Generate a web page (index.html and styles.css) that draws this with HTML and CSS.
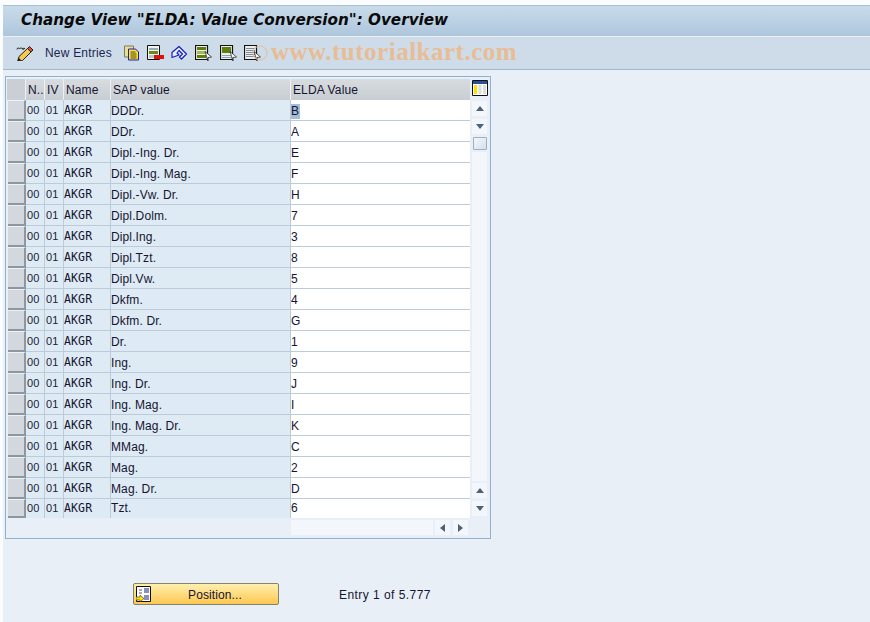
FILE: index.html
```html
<!DOCTYPE html>
<html lang="en">
<head>
<meta charset="utf-8">
<title>Change View</title>
<link rel="stylesheet" href="styles.css">
</head>
<body>
<div class="screen">
  <header class="titlebar"><h1>Change View "ELDA: Value Conversion": Overview</h1></header>
  <div class="toolbar">
    <svg class="ic ic-first" viewBox="0 0 18 16"><path d="M1 4.500c0-2 2-2 2.500-.5M3.500 4c1-1.500 2-1.500 2.500-.5s2-1.500 3 .5M6 3.500c.5 1 2 1 2.500 0" fill="none" stroke="#222"/><path d="M3 11.500l8.500-8 3.500 3.500-8.500 8.500-5 1.500z" fill="#f6c84e" stroke="#222"/><path d="M11.500 3.500l2-2 3.500 3.500-2 2z" fill="#e0503a" stroke="#222"/><path d="M1.500 16.500l1-4 3 3z" fill="#222"/></svg>
    <span class="tool-text">New Entries</span>
    <svg class="ic ic-copy" viewBox="0 0 16 16"><path d="M1 1h9v11H1z" fill="#e8e090" stroke="#777"/><path d="M5 4h7l3 3v8H5z" fill="#ffe21a" stroke="#1a1ad0"/><path d="M7 7h5M7 9h6M7 11h6M7 13h6" stroke="#444"/></svg>
    <svg class="ic ic-delim" viewBox="0 0 17 16"><path d="M.5.500h12v14H.5z" fill="#f2f2f2" stroke="#111"/><path d="M2 3h9v2H2z" fill="#9ab"/><path d="M2 6h9v3H2z" fill="#6b8a10"/><path d="M2 10h9v3H2z" fill="#b8c6d4"/><path d="M7 10h10v4H7z" fill="#e01010"/></svg>
    <svg class="ic ic-undo" viewBox="0 0 17 16"><path d="M1 7.500L8 1.500l7.500 7.500-5 5-2-2 3-3-3.500-3.500-2 2.500 2 2-7 2.500z" fill="#e6eef8" stroke="#1a1ac0" stroke-width="1.200" stroke-linejoin="round"/></svg>
    <svg class="ic ic-sel" viewBox="0 0 17 16"><path d="M.5.500h12v14H.5z" fill="#eee" stroke="#111" stroke-width="1.200"/><path d="M2 2h9v3H2z" fill="#5f7f08"/><path d="M2 6h9v3H2z" fill="#a3b860"/><path d="M2 10h9v3H2z" fill="#5f7f08"/><path d="M10 6.500l6.500 5.500-3.500.5v3.500z" fill="#fff" stroke="#111" stroke-width=".7"/></svg>
    <svg class="ic ic-sel" viewBox="0 0 17 16"><path d="M.5.500h12v14H.5z" fill="#eee" stroke="#111" stroke-width="1.200"/><path d="M2 2h9v6H2z" fill="#5f7f08"/><path d="M2 10h9v1H2zM2 12h9v1H2z" fill="#8aa0b8"/><path d="M10 6.500l6.500 5.500-3.500.5v3.500z" fill="#fff" stroke="#111" stroke-width=".7"/></svg>
    <svg class="ic ic-sel" viewBox="0 0 17 16"><path d="M.5.500h12v14H.5z" fill="#eee" stroke="#111" stroke-width="1.200"/><path d="M2 3h9v1H2zM2 5h9v1H2zM2 7h9v1H2zM2 9h9v1H2zM2 11h9v1H2z" fill="#7a8a9a"/><path d="M10 6.500l6.500 5.500-3.500.5v3.500z" fill="#fff" stroke="#111" stroke-width=".7"/></svg>
    <svg class="mark-circle" viewBox="0 0 16 16"><circle cx="8" cy="8" r="7" fill="none" stroke="#e8bd95" stroke-width="1"/></svg>
    <span class="watermark">www.tutorialkart.com</span>
  </div>
  <main class="content">
    <section class="panel">
      <div class="table">
        <div class="row head"><div class="sel"></div><div class="c">N..</div><div class="c">IV</div><div class="c">Name</div><div class="c sap">SAP value</div><div class="c elda">ELDA Value</div></div>
        <div class="row"><div class="sel"></div><div class="c n">00</div><div class="c n">01</div><div class="c k">AKGR</div><div class="c sap">DDDr.</div><div class="c elda"><span class="hl">B</span></div></div>
        <div class="row"><div class="sel"></div><div class="c n">00</div><div class="c n">01</div><div class="c k">AKGR</div><div class="c sap">DDr.</div><div class="c elda">A</div></div>
        <div class="row"><div class="sel"></div><div class="c n">00</div><div class="c n">01</div><div class="c k">AKGR</div><div class="c sap">Dipl.-Ing. Dr.</div><div class="c elda">E</div></div>
        <div class="row"><div class="sel"></div><div class="c n">00</div><div class="c n">01</div><div class="c k">AKGR</div><div class="c sap">Dipl.-Ing. Mag.</div><div class="c elda">F</div></div>
        <div class="row"><div class="sel"></div><div class="c n">00</div><div class="c n">01</div><div class="c k">AKGR</div><div class="c sap">Dipl.-Vw. Dr.</div><div class="c elda">H</div></div>
        <div class="row"><div class="sel"></div><div class="c n">00</div><div class="c n">01</div><div class="c k">AKGR</div><div class="c sap">Dipl.Dolm.</div><div class="c elda">7</div></div>
        <div class="row"><div class="sel"></div><div class="c n">00</div><div class="c n">01</div><div class="c k">AKGR</div><div class="c sap">Dipl.Ing.</div><div class="c elda">3</div></div>
        <div class="row"><div class="sel"></div><div class="c n">00</div><div class="c n">01</div><div class="c k">AKGR</div><div class="c sap">Dipl.Tzt.</div><div class="c elda">8</div></div>
        <div class="row"><div class="sel"></div><div class="c n">00</div><div class="c n">01</div><div class="c k">AKGR</div><div class="c sap">Dipl.Vw.</div><div class="c elda">5</div></div>
        <div class="row"><div class="sel"></div><div class="c n">00</div><div class="c n">01</div><div class="c k">AKGR</div><div class="c sap">Dkfm.</div><div class="c elda">4</div></div>
        <div class="row"><div class="sel"></div><div class="c n">00</div><div class="c n">01</div><div class="c k">AKGR</div><div class="c sap">Dkfm. Dr.</div><div class="c elda">G</div></div>
        <div class="row"><div class="sel"></div><div class="c n">00</div><div class="c n">01</div><div class="c k">AKGR</div><div class="c sap">Dr.</div><div class="c elda">1</div></div>
        <div class="row"><div class="sel"></div><div class="c n">00</div><div class="c n">01</div><div class="c k">AKGR</div><div class="c sap">Ing.</div><div class="c elda">9</div></div>
        <div class="row"><div class="sel"></div><div class="c n">00</div><div class="c n">01</div><div class="c k">AKGR</div><div class="c sap">Ing. Dr.</div><div class="c elda">J</div></div>
        <div class="row"><div class="sel"></div><div class="c n">00</div><div class="c n">01</div><div class="c k">AKGR</div><div class="c sap">Ing. Mag.</div><div class="c elda">I</div></div>
        <div class="row"><div class="sel"></div><div class="c n">00</div><div class="c n">01</div><div class="c k">AKGR</div><div class="c sap">Ing. Mag. Dr.</div><div class="c elda">K</div></div>
        <div class="row"><div class="sel"></div><div class="c n">00</div><div class="c n">01</div><div class="c k">AKGR</div><div class="c sap">MMag.</div><div class="c elda">C</div></div>
        <div class="row"><div class="sel"></div><div class="c n">00</div><div class="c n">01</div><div class="c k">AKGR</div><div class="c sap">Mag.</div><div class="c elda">2</div></div>
        <div class="row"><div class="sel"></div><div class="c n">00</div><div class="c n">01</div><div class="c k">AKGR</div><div class="c sap">Mag. Dr.</div><div class="c elda">D</div></div>
        <div class="row last"><div class="sel"></div><div class="c n">00</div><div class="c n">01</div><div class="c k">AKGR</div><div class="c sap">Tzt.</div><div class="c elda">6</div></div>
        <div class="hscroll">
          <div class="htrack"></div>
          <div class="sb"><span class="tri left"></span></div>
          <div class="sb"><span class="tri right"></span></div>
        </div>
      </div>
      <div class="vscroll">
        <svg class="colcfg" viewBox="0 0 16 16"><path d="M.5.500h15v15H.5z" fill="#fff" stroke="#111"/><path d="M1 1h14v3H1z" fill="#2a4f9a"/><path d="M2 5h3v9H2z" fill="#ffe000"/><path d="M6.500 5h3v9h-3zM11 5h3v9h-3z" fill="#d8dde2"/></svg>
        <div class="sb v first"><span class="tri up"></span></div>
        <div class="sb v"><span class="tri down"></span></div>
        <div class="thumb"></div>
        <div class="vtrack"></div>
        <div class="sb v"><span class="tri up"></span></div>
        <div class="sb v"><span class="tri down"></span></div>
      </div>
    </section>
    <div class="footer">
      <button class="btn" type="button">
        <svg class="btn-ic" viewBox="0 0 16 16"><path d="M.5.500h14v15H.5z" fill="#fff" stroke="#111"/><path d="M8 2h5v5H8zM8 9h5v5H8z" fill="#8a90b8"/><path d="M3 4h3M3 7h3" stroke="#555"/><path d="M0 11h4V9l4 3.500L4 16v-2H0z" fill="#ffe000" stroke="#333" stroke-width=".6"/></svg>
        <span>Position...</span>
      </button>
      <span class="entry">Entry 1 of 5.777</span>
    </div>
  </main>
</div>
</body>
</html>
```
FILE: styles.css
```css
* { box-sizing: border-box; }
html, body { margin: 0; height: 100%; background: #fbfcfd; }
body { padding: 5px 0 0 3px; font-family: "Liberation Sans", Arial, sans-serif; color: #111; overflow: hidden; }
.screen { height: 617px; display: flex; flex-direction: column; background: #e8eff7; }
.titlebar { height: 32px; display: flex; align-items: center; padding: 0 0 3px 18px; background: linear-gradient(#c9dbea, #aec6dc); border-top: 1px solid #a9c0d6; border-bottom: 1px solid #e8f0f6; flex: none; }
.titlebar h1 { margin: 0; font: italic bold 15.200px "DejaVu Sans", sans-serif; color: #0a0a0a; white-space: nowrap; }
.toolbar { height: 33px; position: relative; display: flex; align-items: center; padding-left: 13px; background: #cddce8; border-bottom: 1px solid #9fb8d0; flex: none; }
.ic { flex: none; width: 17px; height: 16px; margin-right: 7.200px; }
.ic-first { width: 18px; margin-right: 11px; }
.tool-text { font-size: 12px; letter-spacing: .2px; color: #1c2450; margin-right: 11px; }
.mark-circle { position: absolute; left: 249px; top: 8px; width: 16px; height: 16px; }
.watermark { position: absolute; left: 268px; top: 1px; font: bold 25px "Liberation Serif", serif; letter-spacing: .5px; color: #e8bd95; white-space: nowrap; }
.content { flex: 1; padding: 6px 0 0 2px; display: flex; flex-direction: column; }
.panel { width: 486px; height: 463px; display: flex; padding: 2px 0 0 1px; border: 1px solid #8fb0cf; }
.table { width: 463px; flex: none; }
.row { display: grid; grid-template-columns: 19px 19px 19px 47px 180px 179px; height: 21px; }
.row.head { height: 21px; background: linear-gradient(#d8dcdf, #c7cdd2); }
.row.last { height: 19px; }
.sel { background: #d2d8dd; margin-left: 1px; border-right: 2px solid #8e979f; border-bottom: 2px solid #8e979f; border-top: 1px solid #eef1f3; }
.row.head .sel { background: #c9cfd4; margin-left: 0; border: 0; border-right: 1px solid #eef1f3; }
.c { padding-left: 2px; font-size: 12px; letter-spacing: .12px; line-height: 22px; white-space: nowrap; overflow: hidden; background: #deeaf4; border-right: 1px solid #bccbd9; border-bottom: 1px solid #bccbd9; color: #151530; }
.row.last .c { border-bottom: 0; line-height: 19px; }
.row.head .c { background: none; border-bottom: 0; border-right: 1px solid #eef1f3; padding-left: 2px; line-height: 23px; }
.row.head .sap, .row.head .elda { padding-left: 2px; }
.c.n { font: 11px/20px "Liberation Sans", sans-serif; padding-left: 1px; letter-spacing: .1px; color: #222233; }
.c.k { font: 11.500px/20px "DejaVu Sans Mono", monospace; padding-left: 0; }
.row.last .c.n, .row.last .c.k { line-height: 19px; }
.c.sap { padding-left: 0; }
.c.elda { background: #fff; padding-left: 0; border-right: 0; }
.row.head .c.elda { padding-left: 2px; border-right: 0; }
.hl { background: #a4bdd8; display: inline-block; line-height: 15px; padding: 0 1px 0 0; }
.hscroll { display: flex; justify-content: flex-end; gap: 3px; padding: 2px 2px 0 0; }
.htrack { width: 142px; height: 15px; background: #f3f6fa; margin-right: -1px; }
.sb { width: 15px; height: 15px; background: #f3f6fa; display: flex; align-items: center; justify-content: center; }
.tri { width: 0; height: 0; border: 0 solid transparent; }
.tri.up { border-width: 0 4px 5px; border-bottom-color: #4c6278; }
.tri.down { border-width: 5px 4px 0; border-top-color: #4c6278; }
.tri.left { border-width: 4px 5px 4px 0; border-right-color: #4c6278; }
.tri.right { border-width: 4px 0 4px 5px; border-left-color: #4c6278; }
.vscroll { width: 21px; flex: none; display: flex; flex-direction: column; align-items: center; padding: 1px 2px 0 0; height: 440px; }
.colcfg { width: 16px; height: 16px; flex: none; }
.sb.v { flex: none; margin-bottom: 3px; }
.sb.v.first { margin-top: 5px; }
.thumb { width: 14px; height: 13px; flex: none; border: 1px solid #9fb0c0; border-radius: 1px; background: linear-gradient(135deg, #f4f7fb, #d4e0ec); }
.vtrack { flex: 1; width: 15px; background: #f3f6fa; margin: 2px 0; }
.footer { display: flex; align-items: center; padding: 44px 0 0 128px; }
.btn { width: 146px; height: 22px; padding: 0 0 0 2px; display: flex; align-items: center; border: 1px solid #85836a; border-radius: 2px; background: linear-gradient(#ffefb0, #fdc850); font: 12px "Liberation Sans", sans-serif; letter-spacing: .1px; color: #151530; }
.btn-ic { width: 16px; height: 16px; flex: none; }
.btn span { flex: 1; text-align: center; padding: 1px 0 0 0; }
.entry { margin: 1px 0 0 60px; font-size: 12px; color: #151530; letter-spacing: .45px; }
```
